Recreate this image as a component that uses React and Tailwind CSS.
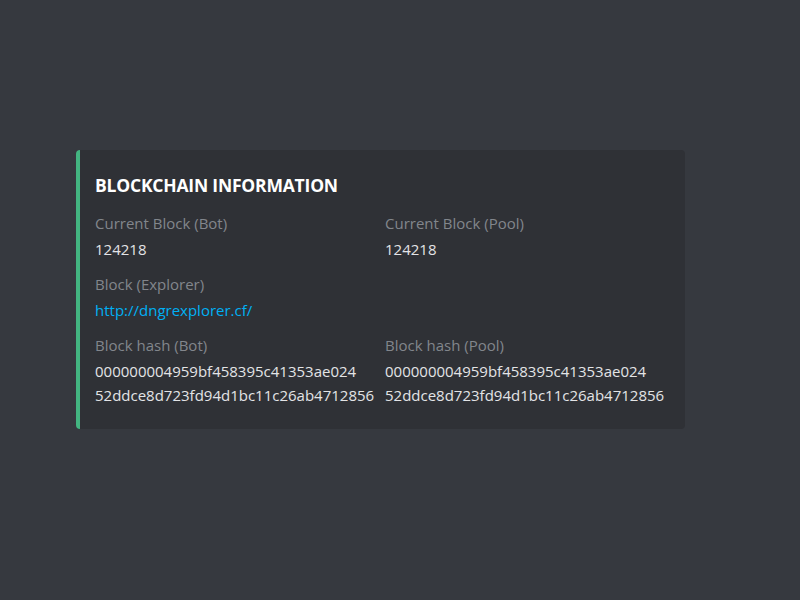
import React from 'react';

const HASH_A = '000000004959bf458395c41353ae024';
const HASH_B = '52ddce8d723fd94d1bc11c26ab4712856';

const Field = ({ name, children, className = '' }) => (
  <div className={`min-w-0 ${className}`}>
    <div className="text-[15px] leading-[24px] text-[#82868c]">{name}</div>
    <div className="mt-[2px] text-[15px] leading-[24px] text-[#e3e4e6]">{children}</div>
  </div>
);

const Hash = () => (
  <>
    <span className="block whitespace-nowrap">{HASH_A}</span>
    <span className="block whitespace-nowrap">{HASH_B}</span>
  </>
);

export default function App() {
  return (
    <div
      className="w-[800px] h-[600px] bg-[#36393f] pt-[150px] pl-[76px]"
      style={{ fontFamily: '"Open Sans", "Noto Sans", sans-serif' }}
    >
      <div className="w-[609px] h-[279px] flex bg-[#2f3136] rounded-[4px]">
        {/* accent bar */}
        <div className="w-[4px] shrink-0 bg-[#43b581] rounded-l-[4px]" />

        <div className="flex-1 pl-[15px] pr-4 pt-[23px]">
          <h2 className="text-[17.5px] leading-[24px] font-bold text-white tracking-[-0.2px]">
            BLOCKCHAIN INFORMATION
          </h2>

          <div className="mt-[14px] grid grid-cols-[290px_1fr] gap-y-[11px]">
            <Field name="Current Block (Bot)">124218</Field>
            <Field name="Current Block (Pool)">124218</Field>

            <Field name="Block (Explorer)" className="col-span-2">
              <a className="text-[#00b0f4]" href="#">http://dngrexplorer.cf/</a>
            </Field>

            <Field name="Block hash (Bot)"><Hash /></Field>
            <Field name="Block hash (Pool)"><Hash /></Field>
          </div>
        </div>
      </div>
    </div>
  );
}
